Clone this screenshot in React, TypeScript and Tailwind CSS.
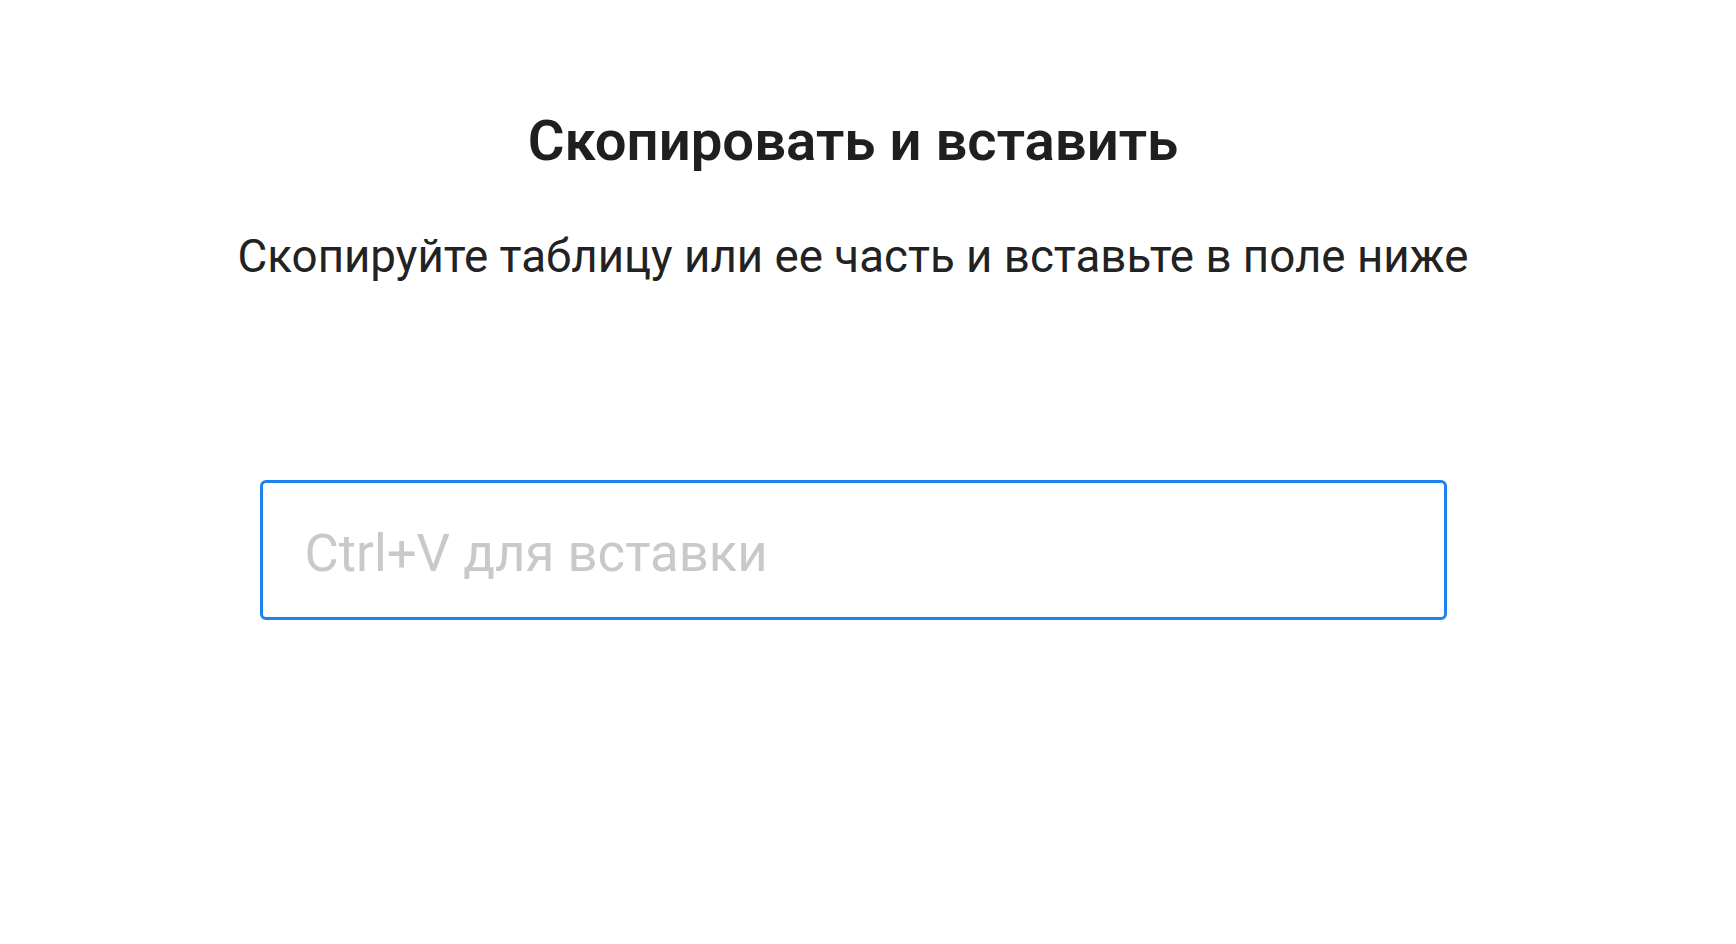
const App = () => {
  return (
    <div className="min-h-screen w-full bg-white">
      <div
        className="w-[1706px] flex flex-col items-center pt-[109px] text-[#1f1f1f]"
        style={{ fontFamily: "Roboto, 'Noto Sans', sans-serif" }}
      >
        {/* заголовок */}
        <h1 className="h-[64px] leading-[64px] text-[56.3px] font-semibold">
          Скопировать и вставить
        </h1>

        {/* подсказка */}
        <p className="mt-[56px] h-[56px] leading-[56px] text-[45.7px] text-[#222]">
          Скопируйте таблицу или ее часть и вставьте в поле ниже
        </p>

        {/* поле ввода */}
        <input
          type="text"
          autoFocus
          placeholder="Ctrl+V для вставки"
          className="mt-[195px] w-[1187px] h-[140px] rounded-[6px] border-[3px] border-[#1b84ee] bg-white pl-[42px] pt-[6px] text-[52.7px] text-[#222] outline-none placeholder:text-[#c9c9c9]"
        />
      </div>
    </div>
  );
};

export default App;
